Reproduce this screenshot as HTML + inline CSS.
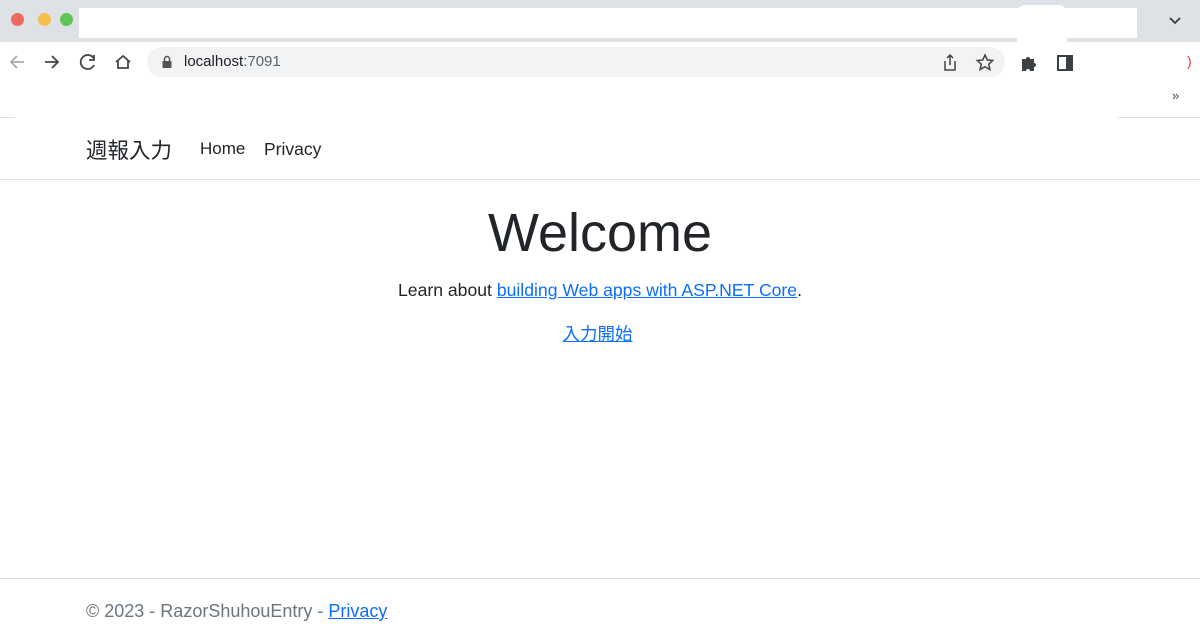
<!DOCTYPE html>
<html><head><meta charset="utf-8"><style>
body{margin:0;width:1200px;height:629px;overflow:hidden;background:#fff;font-family:"Liberation Sans","Noto Sans CJK JP",sans-serif;position:relative}
.a{position:absolute}
a{color:#0d6efd;text-decoration:underline}
</style></head><body>
<div class="a" style="left:0;top:0;width:1200px;height:42px;background:#dee1e6"></div>
<div class="a" style="left:79px;top:8px;width:1058px;height:30px;background:#fff"></div>
<div class="a" style="left:1017px;top:5px;width:50px;height:37px;background:#fff;border-radius:8px 8px 0 0"></div>
<div class="a" style="left:11px;top:13px;width:13px;height:13px;border-radius:50%;background:#ec6a5e"></div>
<div class="a" style="left:38px;top:13px;width:13px;height:13px;border-radius:50%;background:#f4bf4f"></div>
<div class="a" style="left:60px;top:13px;width:13px;height:13px;border-radius:50%;background:#61c554"></div>
<svg class="a" style="left:1168px;top:16px" width="14" height="10"><path d="M2 2l5 5 5-5" stroke="#333" stroke-width="1.6" fill="none"/></svg>
<svg class="a" style="left:0;top:48px" width="140" height="28" fill="none" stroke-width="1.8">
<path d="M24 14H11M17 8l-6 6 6 6" stroke="#aaa"/>
<path d="M45 14h13M52 8l6 6-6 6" stroke="#444"/>
<path d="M94 11a7 7 0 1 0 0 6M94 7v5h-5" stroke="#444"/>
<path d="M116 14l7-6 7 6M118 13v7h10v-7" stroke="#444"/>
</svg>
<div class="a" style="left:147px;top:47px;width:858px;height:30px;border-radius:15px;background:#f1f3f4"></div>
<svg class="a" style="left:161px;top:55px" width="12" height="14"><rect x="1.5" y="6" width="9" height="7" rx="1" fill="#555"/><path d="M3.5 6V4a2.5 2.5 0 0 1 5 0v2" stroke="#555" stroke-width="1.5" fill="none"/></svg>
<div class="a" style="left:184px;top:53px;font-size:15px;color:#202124">localhost<span style="color:#5f6368">:7091</span></div>
<svg class="a" style="left:940px;top:52px" width="60" height="22" fill="none" stroke="#444" stroke-width="1.5"><path d="M5 9v9h10V9M10 3v10M7 6l3-3 3 3"/><path d="M45 3l2.3 5 5.4.5-4 3.7 1.2 5.3-4.9-2.8-4.9 2.8 1.2-5.3-4-3.7 5.4-.5z"/></svg>
<svg class="a" style="left:1020px;top:53px" width="60" height="20"><path d="M2 6h4a2 2 0 1 1 4 0h4v4a2 2 0 1 1 0 4v4h-4a2 2 0 1 0-4 0H2z" fill="#3c4043"/><rect x="38" y="3" width="14" height="14" fill="none" stroke="#3c4043" stroke-width="2"/><rect x="46" y="3" width="6" height="14" fill="#3c4043"/></svg>
<div class="a" style="left:1187px;top:53px;color:#e33;font-size:14px">)</div>
<div class="a" style="left:1172px;top:88px;color:#444;font-size:13px">»</div>
<div class="a" style="left:0;top:117px;width:15px;height:1px;background:#ddd"></div>
<div class="a" style="left:1118px;top:117px;width:82px;height:1px;background:#ddd"></div>
<div class="a" style="left:0;top:179px;width:1200px;height:1px;background:#dee2e6;box-shadow:0 1px 4px rgba(0,0,0,.08)"></div>
<div class="a" style="left:86px;top:134px;font-size:21.5px;color:#212529">週報入力</div>
<div class="a" style="left:200px;top:139px;font-size:17px;color:#212529">Home</div>
<div class="a" style="left:264px;top:139px;font-size:17.5px;color:#212529">Privacy</div>
<div class="a" style="left:0;width:1200px;top:202px;text-align:center;font-size:54px;color:#212529">Welcome</div>
<div class="a" style="left:0;width:1200px;top:280px;text-align:center;font-size:17.6px;color:#212529">Learn about <a>building Web apps with ASP.NET Core</a>.</div>
<div class="a" style="left:0;width:1200px;top:321px;text-align:center;font-size:17.5px;padding-right:5px;box-sizing:border-box"><a>入力開始</a></div>
<div class="a" style="left:0;top:578px;width:1200px;height:1px;background:#dee2e6"></div>
<div class="a" style="left:86px;top:601px;font-size:18px;color:#6c757d">© 2023 - RazorShuhouEntry - <a>Privacy</a></div>
</body></html>
